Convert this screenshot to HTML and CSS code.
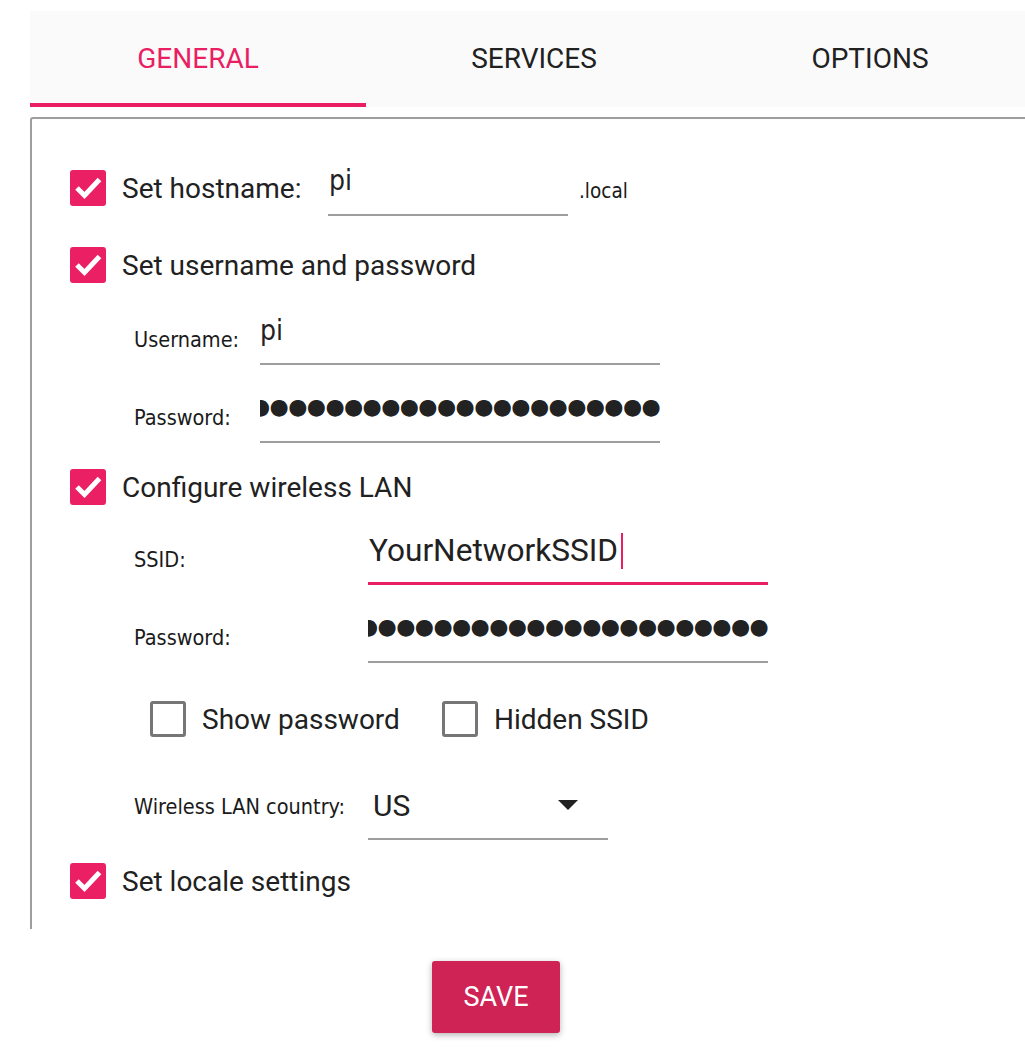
FILE: index.html
```html
<!DOCTYPE html>
<html lang="en">
<head>
<meta charset="utf-8">
<title>Advanced options</title>
<link rel="stylesheet" href="styles.css">
</head>
<body>
<div class="tabs">
  <div class="tab active">GENERAL</div>
  <div class="tab">SERVICES</div>
  <div class="tab">OPTIONS</div>
</div>
<div class="panel">
  <div class="row row-host">
    <span class="cb checked"><svg viewBox="0 0 36 36" width="36" height="36"><path d="M7 18 L14.5 25.5 L29.5 9.5" fill="none" stroke="#fff" stroke-width="5"/></svg></span>
    <span class="label label-host">Set hostname:</span>
    <div class="field field-host"><span class="val">pi</span></div>
    <span class="suffix">.local</span>
  </div>
  <div class="row row-user">
    <span class="cb checked"><svg viewBox="0 0 36 36" width="36" height="36"><path d="M7 18 L14.5 25.5 L29.5 9.5" fill="none" stroke="#fff" stroke-width="5"/></svg></span>
    <span class="label">Set username and password</span>
  </div>
  <div class="sub sub-user">
    <span class="sublabel sublabel-user">Username:</span>
    <div class="field field-user"><span class="val">pi</span></div>
  </div>
  <div class="sub sub-pass">
    <span class="sublabel sublabel-user">Password:</span>
    <div class="field field-user"><span class="dots">●●●●●●●●●●●●●●●●●●●●●●</span></div>
  </div>
  <div class="row row-wifi">
    <span class="cb checked"><svg viewBox="0 0 36 36" width="36" height="36"><path d="M7 18 L14.5 25.5 L29.5 9.5" fill="none" stroke="#fff" stroke-width="5"/></svg></span>
    <span class="label">Configure wireless LAN</span>
  </div>
  <div class="sub sub-ssid">
    <span class="sublabel sublabel-wifi">SSID:</span>
    <div class="field field-wifi field-focus"><span class="val-roboto">YourNetworkSSID</span><span class="cursor"></span></div>
  </div>
  <div class="sub sub-pass">
    <span class="sublabel sublabel-wifi">Password:</span>
    <div class="field field-wifi"><span class="dots">●●●●●●●●●●●●●●●●●●●●●●</span></div>
  </div>
  <div class="row row-opts">
    <div class="opt opt-show">
      <span class="cb"></span>
      <span class="label">Show password</span>
    </div>
    <div class="opt">
      <span class="cb"></span>
      <span class="label">Hidden SSID</span>
    </div>
  </div>
  <div class="sub sub-country">
    <span class="sublabel sublabel-wifi">Wireless LAN country:</span>
    <div class="combo"><span class="combo-val">US</span><span class="arrow"></span></div>
  </div>
  <div class="row row-locale">
    <span class="cb checked"><svg viewBox="0 0 36 36" width="36" height="36"><path d="M7 18 L14.5 25.5 L29.5 9.5" fill="none" stroke="#fff" stroke-width="5"/></svg></span>
    <span class="label">Set locale settings</span>
  </div>
</div>
<div class="footer">
  <button class="save">SAVE</button>
</div>
</body>
</html>
```
FILE: styles.css
```css
html, body {
  margin: 0;
  padding: 0;
  background: #ffffff;
  overflow: hidden;
}
body {
  width: 1025px;
  height: 1050px;
  font-family: Roboto, "Liberation Sans", sans-serif;
  color: #212121;
}
.tabs {
  margin: 11px 0 0 30px;
  width: 1010px;
  height: 96px;
  display: flex;
  background: #fafafa;
}
.tab {
  flex: 0 0 336px;
  display: flex;
  align-items: center;
  justify-content: center;
  box-sizing: border-box;
  padding-top: 3px;
  border-bottom: 4px solid transparent;
  font-size: 28px;
  color: #212121;
}
.tab.active {
  color: #e91e63;
  border-bottom-color: #e91e63;
}
.panel {
  margin: 10px 0 0 30px;
  width: 1000px;
  height: 812px;
  box-sizing: border-box;
  border-top: 2px solid #9e9e9e;
  border-left: 2px solid #9e9e9e;
  border-top-left-radius: 3px;
  padding: 41px 0 0 38px;
  overflow: hidden;
}
.row {
  display: flex;
  align-items: center;
  height: 56px;
}
.row-user { margin-top: 21px; }
.row-wifi { margin-top: 16px; }
.row-opts { margin-top: 28px; padding-left: 80px; }
.row-locale { margin-top: 13px; }
.cb {
  flex: 0 0 36px;
  width: 36px;
  height: 36px;
  box-sizing: border-box;
  border: 3px solid #767676;
  border-radius: 3px;
  margin-right: 16px;
}
.cb.checked {
  background: #eb1f64;
  border: none;
}
.cb svg { display: block; }
.label {
  font-size: 28px;
  line-height: 33px;
  color: #212121;
  white-space: nowrap;
}
.label-host { width: 206px; flex: 0 0 206px; }
.suffix {
  margin-left: 11px;
  margin-top: 6px;
  font-family: "DejaVu Sans Condensed", "DejaVu Sans", sans-serif;
  font-stretch: condensed;
  font-size: 20.5px;
  color: #1a1a1a;
}
.field {
  box-sizing: border-box;
  border-bottom: 2px solid #9e9e9e;
  display: flex;
  align-items: flex-end;
  overflow: hidden;
  white-space: nowrap;
}
.field-host { width: 240px; height: 56px; padding: 0 0 17px 1px; }
.val {
  font-family: "DejaVu Sans Condensed", "DejaVu Sans", sans-serif;
  font-stretch: condensed;
  font-size: 28px;
  line-height: 33px;
  color: #222;
}
.sub {
  display: flex;
  align-items: center;
  padding-left: 64px;
}
.sub-user { margin-top: 20px; height: 52px; }
.sub-pass { margin-top: 26px; height: 52px; }
.sub-ssid { margin-top: 18px; height: 52px; }
.sub-country { margin-top: 25px; height: 68px; }
.sublabel {
  font-family: "DejaVu Sans Condensed", "DejaVu Sans", sans-serif;
  font-stretch: condensed;
  font-size: 21.5px;
  color: #1a1a1a;
  white-space: nowrap;
}
.sublabel-user { flex: 0 0 126px; }
.sublabel-wifi { flex: 0 0 234px; }
.field-user { width: 400px; height: 52px; padding-bottom: 16px; }
.field-wifi { width: 400px; height: 52px; padding-bottom: 16px; }
.field-focus {
  border-bottom: 3px solid #e91e63;
  padding: 0 0 13px 1px;
}
.dots {
  font-family: "DejaVu Sans", sans-serif;
  font-size: 22px;
  line-height: 30px;
  letter-spacing: -0.6px;
  color: #222;
  margin-bottom: 3px;
  text-indent: -9px;
  display: block;
}
.val-roboto {
  font-size: 31.6px;
  line-height: 36px;
  color: #212121;
}
.cursor {
  width: 2px;
  height: 36px;
  background: #e91e63;
  margin-left: 3px;
}
.opt {
  display: flex;
  align-items: center;
}
.opt-show { width: 292px; }
.combo {
  width: 240px;
  height: 68px;
  box-sizing: border-box;
  border-bottom: 2px solid #9e9e9e;
  display: flex;
  align-items: center;
  justify-content: space-between;
  padding: 0 30px 0 5px;
}
.combo-val {
  font-size: 30px;
  color: #212121;
}
.arrow {
  width: 0;
  height: 0;
  border-left: 10px solid transparent;
  border-right: 10px solid transparent;
  border-top: 10px solid #212121;
}
.footer {
  margin-top: 32px;
  padding-left: 432px;
}
.save {
  width: 128px;
  height: 72px;
  border: none;
  border-radius: 3px;
  background: #cf2356;
  color: #ffffff;
  font-family: Roboto, "Liberation Sans", sans-serif;
  font-size: 27px;
  box-shadow: 0 2px 6px rgba(0, 0, 0, 0.3);
  padding: 0;
}
```
